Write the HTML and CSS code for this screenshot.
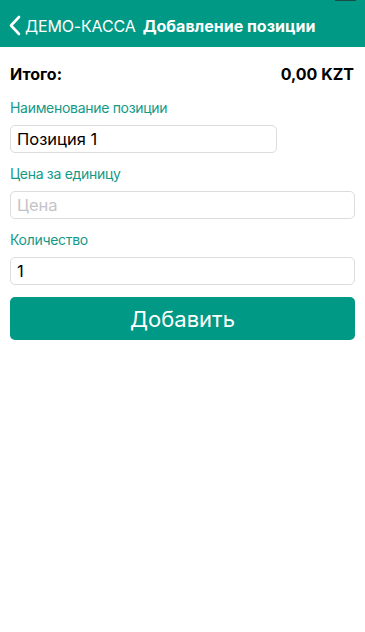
FILE: index.html
```html
<!DOCTYPE html>
<html lang="ru">

<head>
  <meta charset="UTF-8">
  <meta name="viewport" content="width=device-width, initial-scale=1.0">
  <title>Добавление позиции</title>
  <link rel="stylesheet" href="styles.css">
</head>

<body>
  <div class="navbar">
    <span class="status-mark"></span>
    <a href="#" class="back">
      <svg class="chevron" width="12" height="21" viewBox="0 0 12 21">
        <path d="M10 2 L2 10.5 L10 19" fill="none" stroke="#fff" stroke-width="2.6" stroke-linecap="round" stroke-linejoin="round"/>
      </svg>
      <span>ДЕМО-КАССА</span>
    </a>
    <h1 class="title">Добавление позиции</h1>
  </div>

  <div class="content">
    <div class="total">
      <span>Итого:</span>
      <span>0,00 KZT</span>
    </div>

    <label class="field-label">Наименование позиции</label>
    <input class="field field-short" type="text" value="Позиция 1">

    <label class="field-label">Цена за единицу</label>
    <input class="field" type="text" placeholder="Цена">

    <label class="field-label">Количество</label>
    <input class="field" type="text" value="1">

    <button class="add-btn">Добавить</button>
  </div>
</body>

</html>
```

FILE: styles.css
```css
html,
body {
  margin: 0;
  width: 365px;
  height: 632px;
  background: #fff;
  overflow: hidden;
  font-family: Inter, 'Liberation Sans', Arial, sans-serif;
  color: #000;
}

.navbar {
  position: relative;
  height: 47px;
  background: #009985;
  display: flex;
  align-items: center;
  padding: 0 0 0 9px;
  box-sizing: border-box;
}

.status-mark {
  position: absolute;
  top: 0;
  right: 9px;
  width: 21px;
  height: 1px;
  background: #1c4a44;
}

.back {
  display: flex;
  align-items: center;
  color: #fff;
  text-decoration: none;
  font-size: 16px;
  letter-spacing: -0.15px;
  margin-top: 4px;
}

.back .chevron {
  margin-right: 4px;
}

.title {
  margin: 4px 0 0 7px;
  color: #fff;
  font-size: 16px;
  font-weight: 700;
}

.content {
  display: flex;
  flex-direction: column;
  padding: 17px 10px 0 10px;
}

.total {
  display: flex;
  justify-content: space-between;
  font-weight: 700;
  font-size: 16px;
  line-height: 20px;
  padding-right: 1px;
  margin-bottom: 3px;
}

.field-label {
  color: #139988;
  font-size: 14px;
  letter-spacing: -0.3px;
  line-height: 17px;
  margin-top: 12px;
  margin-bottom: 9px;
}

.field {
  height: 28px;
  box-sizing: border-box;
  border: 1px solid #dcdcdc;
  border-radius: 5px;
  padding: 0 6px;
  font-family: inherit;
  font-size: 16.5px;
  color: #000;
  outline: none;
}

.field::placeholder {
  color: #c4c4c8;
}

.field-short {
  width: 267px;
}

.add-btn {
  margin-top: 12px;
  height: 43px;
  border: none;
  border-radius: 5px;
  background: #009985;
  color: #fff;
  font-family: inherit;
  font-size: 22px;
}
```
